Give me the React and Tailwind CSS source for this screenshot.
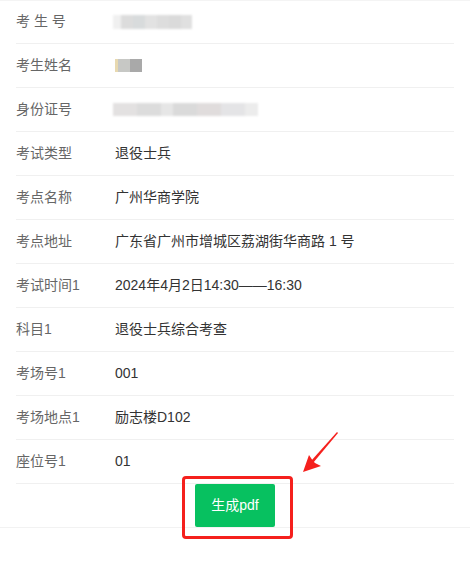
import React from "react";

const rows = [
  { label: "考 生 号", blur: "id" },
  { label: "考生姓名", blur: "name" },
  { label: "身份证号", blur: "card" },
  { label: "考试类型", value: "退役士兵" },
  { label: "考点名称", value: "广州华商学院" },
  { label: "考点地址", value: "广东省广州市增城区荔湖街华商路 1 号" },
  { label: "考试时间1", value: "2024年4月2日14:30——16:30" },
  { label: "科目1", value: "退役士兵综合考查" },
  { label: "考场号1", value: "001" },
  { label: "考场地点1", value: "励志楼D102" },
  { label: "座位号1", value: "01" },
];

const Blur = ({ kind }) => {
  if (kind === "name") {
    return (
      <div className="flex h-[13px] items-center">
        <div className="w-[3px] h-[13px] bg-[#e8d9b0]" />
        <div className="w-[12px] h-[13px] bg-[#c7c8c5]" />
        <div className="w-[12px] h-[13px] bg-[#a9a9a9]" />
      </div>
    );
  }
  if (kind === "card") {
    return (
      <div className="flex h-[13px] w-[145px] -ml-[2px] bg-[#ececec] blur-[1px]">
        <div className="w-[24px] bg-[#e3e1e1]" />
        <div className="w-[24px] bg-[#dcdcdc]" />
        <div className="w-[12px] bg-[#e6e6e6]" />
        <div className="w-[24px] bg-[#dadada]" />
        <div className="w-[24px] bg-[#e0dcdc]" />
        <div className="w-[24px] bg-[#e4e4e6]" />
      </div>
    );
  }
  return (
    <div className="flex h-[14px] w-[79px] -ml-[2px] bg-[#eaeaea] blur-[1px]">
      <div className="w-[8px] bg-[#f0f0f0]" />
      <div className="w-[12px] bg-[#dcdcdc]" />
      <div className="w-[12px] bg-[#d8dbdc]" />
      <div className="w-[12px] bg-[#e2e2e2]" />
      <div className="w-[12px] bg-[#dddddd]" />
      <div className="w-[12px] bg-[#dadada]" />
      <div className="w-[11px] bg-[#e0e0e0]" />
    </div>
  );
};

const Arrow = () => (
  <svg className="absolute left-[300px] top-[430px]" width="40" height="45" viewBox="0 0 40 45">
    <polygon points="37,2 38,3 13,33 11,31" fill="#f5201d" />
    <polygon points="3,42 9,25 13,31 15,33 21,36" fill="#f5201d" />
  </svg>
);

export default function App() {
  return (
    <div
      className="relative w-[470px] h-[577px] bg-white text-[14px]"
      style={{ fontFamily: '"Liberation Sans", "Noto Sans CJK SC", sans-serif' }}
    >
      <div className="border-b border-[#f2f2f2] shadow-[inset_0_1px_0_#f4f4f4]">
        <div className="px-4">
          {rows.map((r) => (
            <div key={r.label} className="flex items-center h-[44px] border-b border-[#f0f0f0]">
              <div className="w-[99px] text-[#666]">{r.label}</div>
              {r.blur ? <Blur kind={r.blur} /> : <div className="text-[#333]">{r.value}</div>}
            </div>
          ))}
        </div>
        <div className="flex justify-center h-[43px]">
          <button className="w-[80px] h-[43px] rounded-[2px] bg-[#07c160] text-white text-[14px]">
            生成pdf
          </button>
        </div>
      </div>
      <div className="absolute left-[182px] top-[476px] w-[111px] h-[63px] border-[3px] border-[#f5201d] rounded-[4px]" />
      <Arrow />
    </div>
  );
}
